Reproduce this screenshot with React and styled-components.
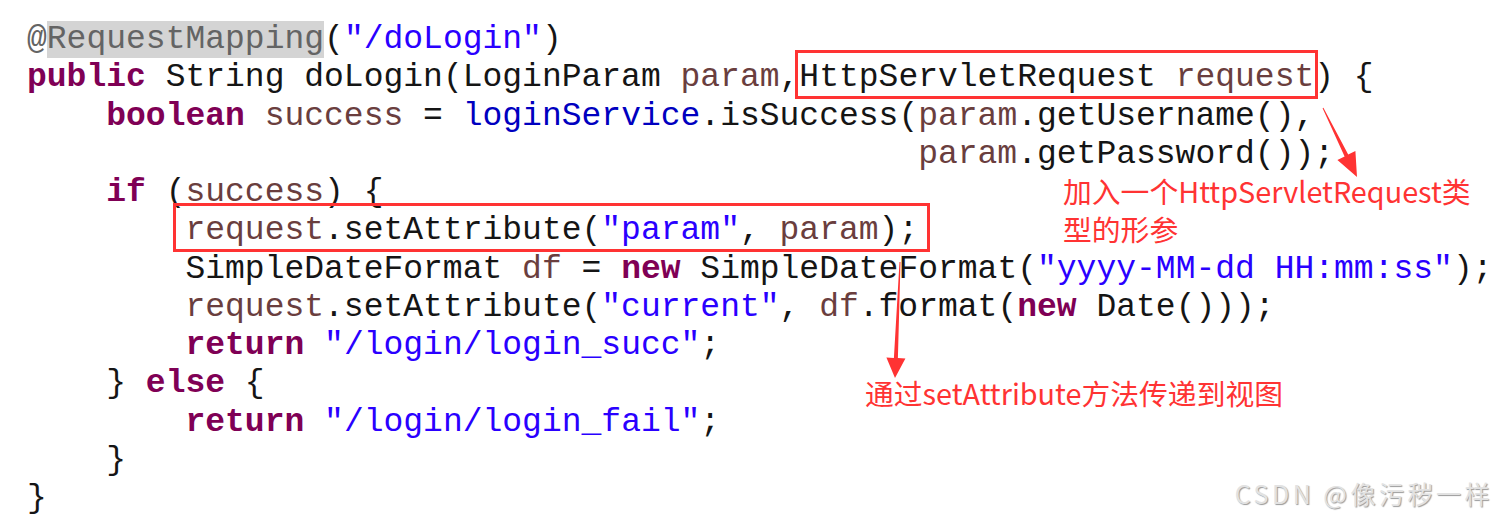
import React from 'react';
import styled, { createGlobalStyle } from 'styled-components';

const GlobalStyle = createGlobalStyle`
    html, body {
        margin: 0;
        padding: 0;
        background: #ffffff;
    }
`;

const COLORS = {
    plain: '#151515',
    kw: '#7f0055',
    var: '#6a3e3e',
    str: '#2a00ff',
    field: '#0000c0',
    ann: '#646464',
};

// each line is a list of [type, text]; 'box' wraps a nested list
const codeLines = [
    [['ann', '@'], ['annHL', 'RequestMapping'], ['plain', '('], ['str', '"/doLogin"'], ['plain', ')']],
    [['kw', 'public'], ['plain', ' String doLogin(LoginParam '], ['var', 'param'], ['plain', ','],
        ['box', [['plain', 'HttpServletRequest '], ['var', 'request']], { left: 4, right: 4 }], ['plain', ') {']],
    [['plain', '    '], ['kw', 'boolean'], ['plain', ' '], ['var', 'success'], ['plain', ' = '], ['field', 'loginService'],
        ['plain', '.isSuccess('], ['var', 'param'], ['plain', '.getUsername(),']],
    [['plain', ' '.repeat(45)], ['var', 'param'], ['plain', '.getPassword());']],
    [['plain', '    '], ['kw', 'if'], ['plain', ' ('], ['var', 'success'], ['plain', ') {']],
    [['plain', ' '.repeat(8)], ['box', [['var', 'request'], ['plain', '.setAttribute('], ['str', '"param"'],
        ['plain', ', '], ['var', 'param'], ['plain', ');']], { left: 12, right: 12 }]],
    [['plain', ' '.repeat(8) + 'SimpleDateFormat '], ['var', 'df'], ['plain', ' = '], ['kw', 'new'],
        ['plain', ' SimpleDateFormat('], ['str', '"yyyy-MM-dd HH:mm:ss"'], ['plain', ');']],
    [['plain', ' '.repeat(8)], ['var', 'request'], ['plain', '.setAttribute('], ['str', '"current"'], ['plain', ', '],
        ['var', 'df'], ['plain', '.format('], ['kw', 'new'], ['plain', ' Date()));']],
    [['plain', ' '.repeat(8)], ['kw', 'return'], ['plain', ' '], ['str', '"/login/login_succ"'], ['plain', ';']],
    [['plain', '    } '], ['kw', 'else'], ['plain', ' {']],
    [['plain', ' '.repeat(8)], ['kw', 'return'], ['plain', ' '], ['str', '"/login/login_fail"'], ['plain', ';']],
    [['plain', '    }']],
    [['plain', '}']],
];

function arrowPoints([x1, y1], [x2, y2], headLen, headW, tailW, shaftW) {
    const dx = x2 - x1;
    const dy = y2 - y1;
    const len = Math.hypot(dx, dy);
    const ux = dx / len;
    const uy = dy / len;
    const nx = -uy;
    const ny = ux;
    const bx = x2 - ux * headLen;
    const by = y2 - uy * headLen;
    const pts = [
        [x1 + nx * tailW / 2, y1 + ny * tailW / 2],
        [bx + nx * shaftW / 2, by + ny * shaftW / 2],
        [bx + nx * headW / 2, by + ny * headW / 2],
        [x2, y2],
        [bx - nx * headW / 2, by - ny * headW / 2],
        [bx - nx * shaftW / 2, by - ny * shaftW / 2],
        [x1 - nx * tailW / 2, y1 - ny * tailW / 2],
    ];
    return pts.map(p => p.map(v => v.toFixed(1)).join(',')).join(' ');
}

function Tokens({ tokens }) {
    return tokens.map(([type, text, box], idx) => {
        if (type === 'box') {
            return (
                <Boxed key={ idx } padLeft={ box.left } padRight={ box.right }>
                    <Tokens tokens={ text } />
                </Boxed>
            );
        }
        if (type === 'annHL') {
            return <Highlight key={ idx }>{text}</Highlight>;
        }
        return <Token key={ idx } tone={ type }>{text}</Token>;
    });
}

function App() {
    return (
        <>
            <GlobalStyle />
            <Canvas>
                <CodeBlock>
                    {codeLines.map((line, idx) => (
                        <CodeLine key={ `line-${idx}` }>
                            <Tokens tokens={ line } />
                        </CodeLine>
                    ))}
                </CodeBlock>

                <Arrows viewBox='0 0 1500 520' width='1500' height='520'>
                    <polygon points={ arrowPoints([1323, 108], [1357, 177], 24, 20, 1, 4) } fill='#ff3333' />
                    <polygon points={ arrowPoints([900, 262], [895, 378], 20, 19, 1, 4) } fill='#ff3333' />
                </Arrows>

                <Note top={ 172 } left={ 1063 }>
                    加入一个HttpServletRequest类<br />型的形参
                </Note>
                <Note top={ 374 } left={ 865 }>
                    通过setAttribute方法传递到视图
                </Note>

                <Watermark>CSDN @像污秽一样</Watermark>
            </Canvas>
        </>
    );
}

const Canvas = styled.div`
    position: relative;
    width: 1500px;
    height: 520px;
    overflow: hidden;
    background: #ffffff;
`;

const CodeBlock = styled.pre`
    margin: 0;
    padding: 21px 0 0 27px;
    font-family: "Liberation Mono", "Courier New", monospace;
    font-size: 33px;
    line-height: 38.25px;
    color: ${COLORS.plain};
`;

const CodeLine = styled.div`
    height: 38.25px;
    white-space: pre;
`;

const Token = styled.span`
    color: ${props => COLORS[props.tone]};
    font-weight: ${props => props.tone === 'kw' ? 700 : 400};
`;

const Highlight = styled.span`
    color: ${COLORS.ann};
    background: #d4d4d4;
`;

const Boxed = styled.span`
    position: relative;

    &::after {
        content: '';
        position: absolute;
        left: -${props => props.padLeft}px;
        right: -${props => props.padRight}px;
        top: -9px;
        bottom: -3px;
        border: 3px solid #ff3333;
        pointer-events: none;
    }
`;

const Arrows = styled.svg`
    position: absolute;
    top: 0;
    left: 0;
    pointer-events: none;
`;

const Note = styled.div`
    position: absolute;
    top: ${props => props.top}px;
    left: ${props => props.left}px;
    font-family: "Noto Sans CJK SC", "Noto Sans", sans-serif;
    font-size: 28.8px;
    line-height: 38px;
    color: #ff3333;
    white-space: nowrap;
`;

const Watermark = styled.div`
    position: absolute;
    right: 7px;
    bottom: 9px;
    font-family: "Noto Sans CJK SC", "Liberation Sans", sans-serif;
    font-size: 25px;
    letter-spacing: 3.5px;
    color: #e2e2e2;
    text-shadow: 1px 1px 1px #9a9a9a;
`;

export default App;
